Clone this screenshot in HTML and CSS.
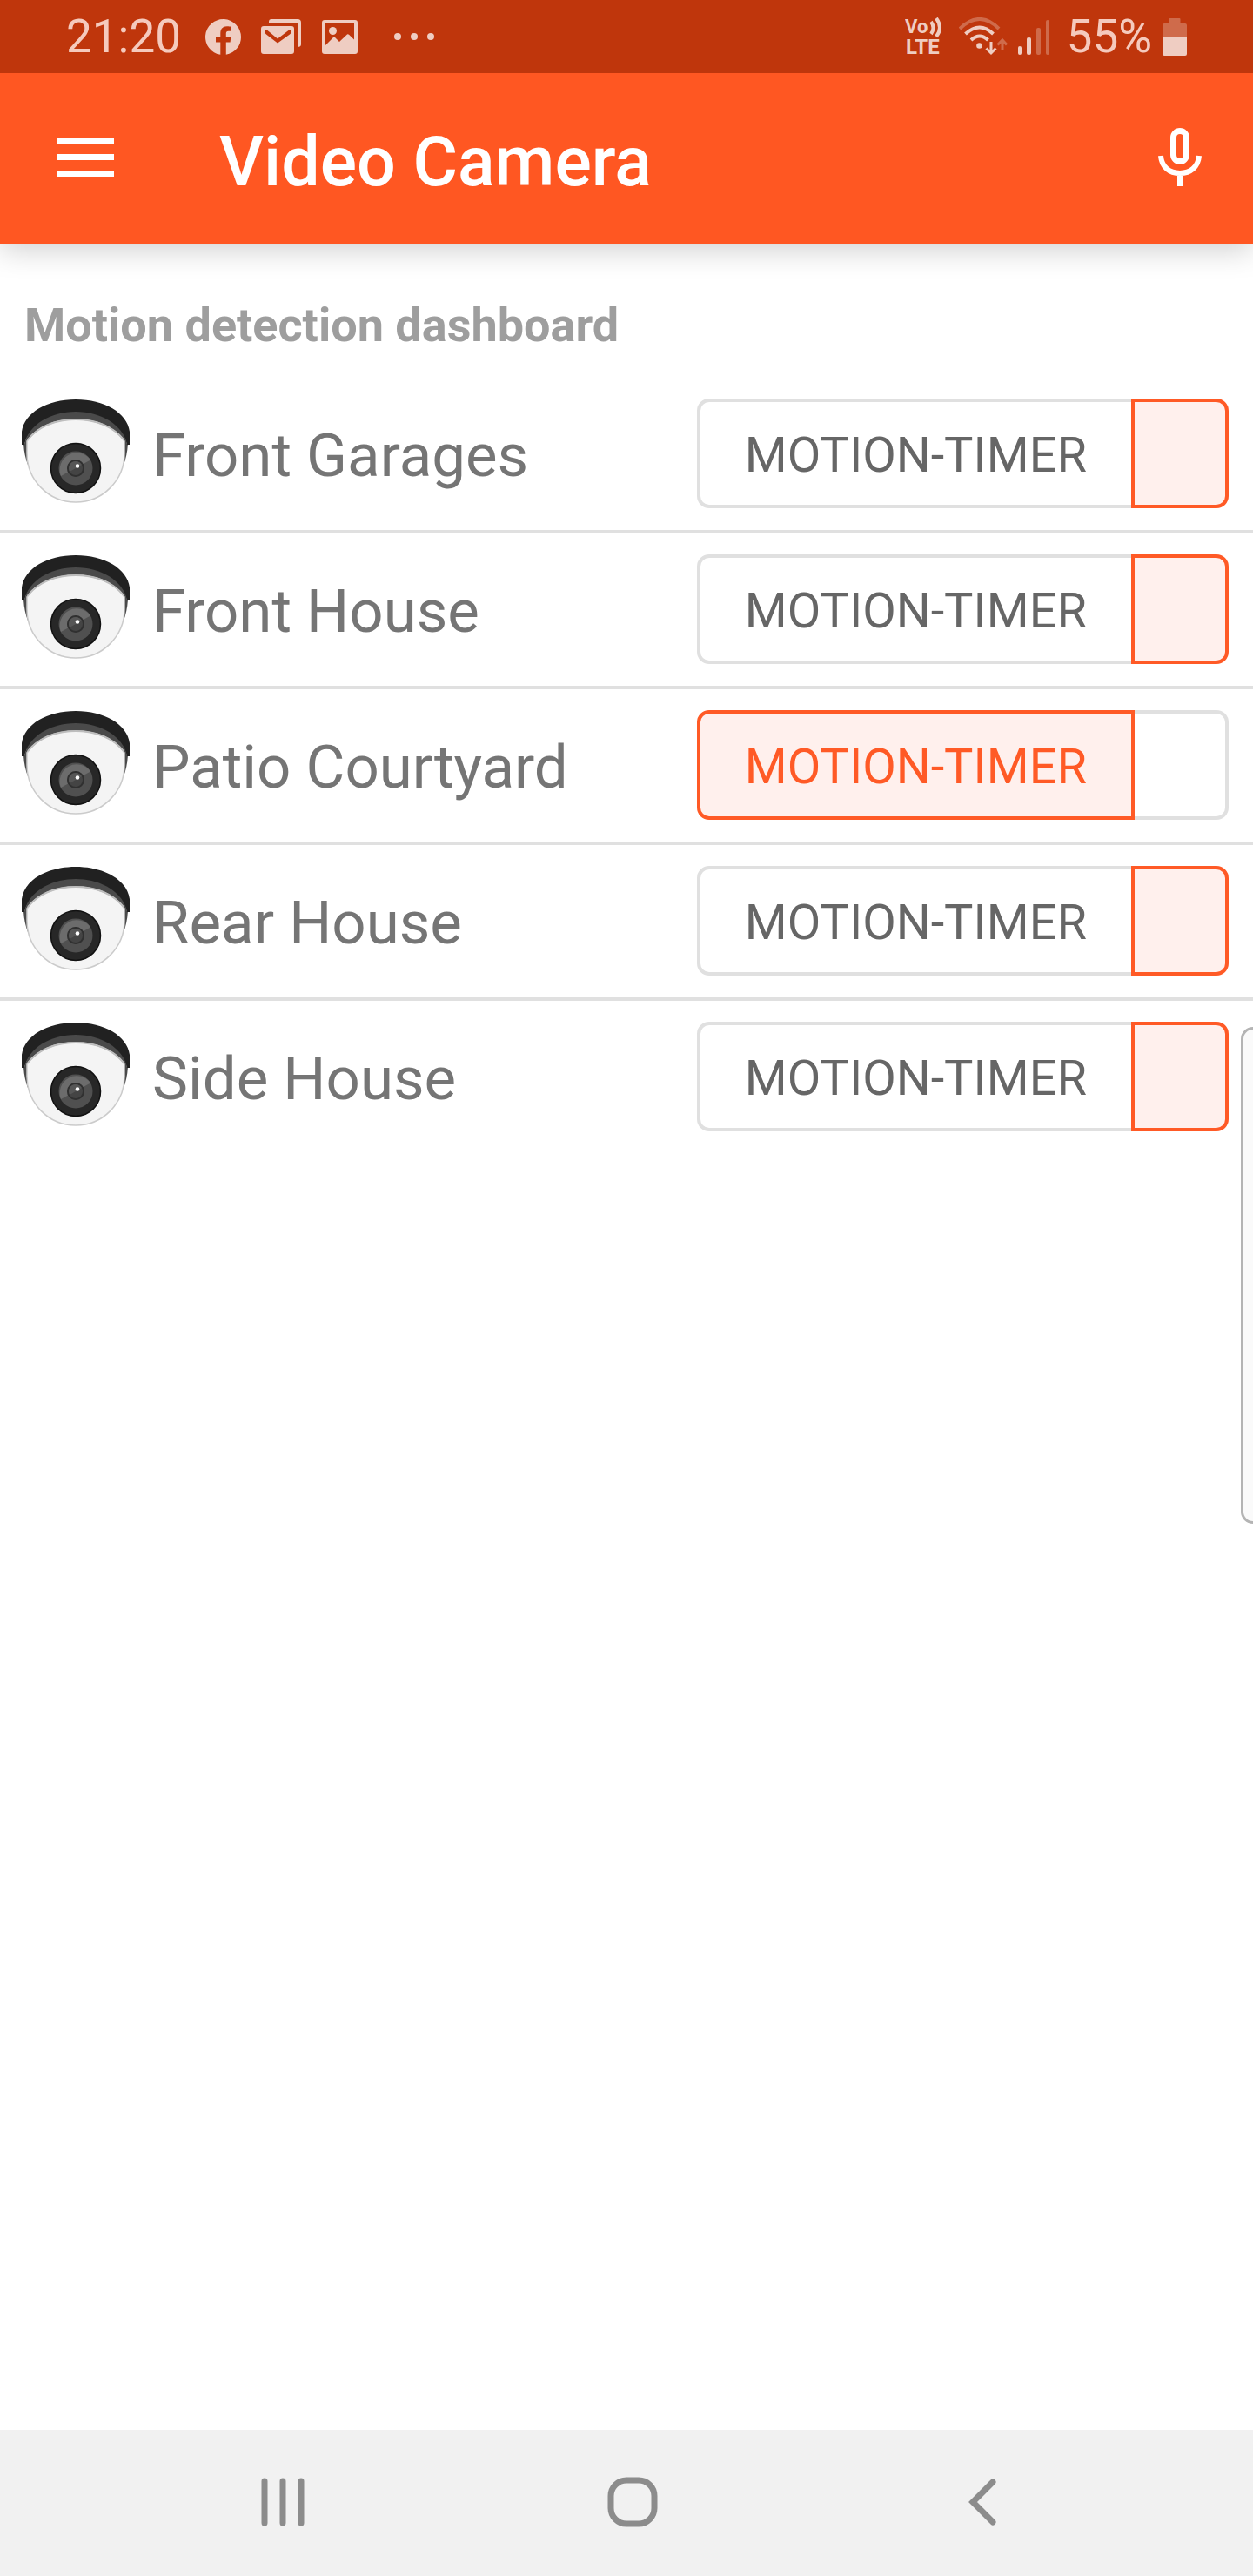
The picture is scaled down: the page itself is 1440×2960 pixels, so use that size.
FILE: index.html
```html
<!DOCTYPE html>
<html lang="en">
<head>
    <meta charset="UTF-8">
    <meta name="viewport" content="width=device-width, initial-scale=1.0">
    <title>Video Camera</title>
    <link rel="stylesheet" href="styles.css">
</head>
<body>
    <!-- Shared camera icon -->
    <svg class="sprite" aria-hidden="true">
        <defs>
            <symbol id="camera" viewBox="0 0 126 120">
                <path d="M3 52 Q4 66 8 76 H118 Q122 66 123 52 Z" fill="#4a4a4a"/>
                <path d="M1 53 V38 C4 16 30 1 63 1 S122 16 125 38 V53 H122 C117 32 94 17 63 17 S9 32 4 53 Z" fill="#212121"/>
                <path d="M4 52 C9 30 34 15 63 15 S117 30 122 52 L118 60 H8 Z" fill="#4a4a4a"/>
                <path d="M7 49 C18 33 38 24 63 24 S108 33 119 49 V63 A56 56 0 0 1 7 63 Z" fill="#f4f4f4" stroke="#cbcbcb" stroke-width="1.5"/>
                <path d="M8 47 C20 32 40 24 63 24 S106 32 118 47" fill="none" stroke="#bdbdbd" stroke-width="2"/>
                <circle cx="63" cy="80" r="28.5" fill="#272727" stroke="#111" stroke-width="1.5"/>
                <circle cx="63" cy="80" r="19.5" fill="#505050"/>
                <path d="M46 89 A19.500 19.500 0 0 1 80 70.500 Z" fill="#6c6c6c"/>
                <circle cx="63" cy="80" r="10" fill="#444"/>
                <circle cx="63" cy="80" r="9" fill="none" stroke="#303030" stroke-width="2"/>
                <path d="M56 84 A8 8 0 0 1 70 76 Z" fill="#565656"/>
                <circle cx="65" cy="77.500" r="2.300" fill="#fff"/>
            </symbol>
        </defs>
    </svg>

    <div class="status-bar">
        <div class="status-group">
            <span class="clock">21:20</span>
            <svg class="icon-fb" width="41" height="41" viewBox="0 0 41 41" role="img" aria-label="Facebook">
                <path d="M41 20.500 A20.500 20.500 0 1 0 17.300 40.800 V26.500 H12 V20.500 H17.300 V16 C17.300 10.700 20.400 8.200 25 8.200 C27 8.200 28.800 8.500 29.300 8.600 V13.700 H26.500 C24.500 13.700 23.800 15 23.800 16.600 V20.500 H29.300 L28.600 26.500 H23.800 V40.800 A20.500 20.500 0 0 0 41 20.500 Z"/>
            </svg>
            <svg class="icon-mail" width="47" height="42" viewBox="0 0 47 42" role="img" aria-label="Mail">
                <path d="M9 4 Q9 1 12 1 H42 Q46 1 46 5 V30 Q46 33 42 33 V5 H9 Z"/>
                <path fill-rule="evenodd" d="M3 9 H35 Q38 9 38 12 V38 Q38 41 35 41 H3 Q0 41 0 38 V12 Q0 9 3 9 Z M5 14 Q4 17 6 18.500 L19 28.500 L33 18.500 Q35 17 34 14 L31.500 14 L19 23.500 L7.500 14 Z"/>
            </svg>
            <svg class="icon-picture" width="41" height="41" viewBox="0 0 41 41" role="img" aria-label="Picture">
                <path fill-rule="evenodd" d="M3 1 H38 Q41 1 41 4 V37 Q41 40 38 40 H3 Q0 40 0 37 V4 Q0 1 3 1 Z M4 5 V30 L13 21 Q14 20.300 15 21 L20 26 L29 17.500 Q30 17 31 17.700 L37 23.500 V5 Z"/>
                <circle cx="12.500" cy="13.500" r="4.500"/>
            </svg>
            <svg class="icon-more" width="46" height="8" viewBox="0 0 46 8" role="img" aria-label="More notifications">
                <circle cx="4" cy="4" r="4"/>
                <circle cx="23" cy="4" r="4"/>
                <circle cx="42" cy="4" r="4"/>
            </svg>
        </div>
        <div class="status-group">
            <svg class="icon-volte" width="44" height="56" viewBox="0 -6 44 56">
                <text x="0" y="18" font-size="22">Vo</text>
                <text x="1" y="42" font-size="24">LTE</text>
                <path class="line" d="M30 5 Q35 12 30 19 M36 1 Q44 12 36 22"/>
            </svg>
            <svg class="icon-wifi" width="56" height="44" viewBox="0 0 56 44" role="img" aria-label="Wi-Fi">
                <path class="line dim" d="M1 13 Q24 -9 46 13"/>
                <path class="line" d="M7.500 19 Q24 4 39.500 19 M14 26 Q24 17 33.500 26"/>
                <circle cx="23.500" cy="32.500" r="3.300"/>
                <path class="line arrow" d="M37 28 V41 M31.500 35.500 L37 41 L42.500 35.500"/>
                <path class="line arrow dim" d="M50 38 V25 M44.500 31.500 L50 26 L55 31.500"/>
            </svg>
            <svg class="icon-signal" width="36" height="41" viewBox="0 0 36 41" role="img" aria-label="Signal">
                <rect x="0" y="31" width="4" height="10" rx="2"/>
                <rect x="10" y="21" width="5" height="20" rx="2"/>
                <rect class="dim" x="21" y="10" width="5" height="31" rx="2"/>
                <rect class="dim" x="32" y="1" width="4" height="40" rx="2"/>
            </svg>
            <span class="battery-text">55%</span>
            <svg class="icon-battery" width="28" height="43" viewBox="0 0 28 43" role="img" aria-label="Battery">
                <path class="dim" d="M0 22 V8 Q0 6 2 6 H7.500 V1 Q7.500 0 8.500 0 H19.500 Q20.500 0 20.500 1 V6 H26 Q28 6 28 8 V22 Z"/>
                <path d="M0 22 H28 V41 Q28 43 26 43 H2 Q0 43 0 41 Z"/>
            </svg>
        </div>
    </div>

    <header class="app-bar">
        <button class="icon-btn" type="button" aria-label="Menu">
            <svg width="66" height="46" viewBox="0 0 66 46">
                <path d="M0 0 H66 V7 H0 Z M0 19 H66 V26 H0 Z M0 38 H66 V45 H0 Z"/>
            </svg>
        </button>
        <h1>Video Camera</h1>
        <button class="icon-btn mic-btn" type="button" aria-label="Voice">
            <svg width="50" height="68" viewBox="0 0 50 68">
                <rect x="17.500" y="3.500" width="15" height="35" rx="7.500" fill="none" stroke="#fff" stroke-width="7"/>
                <path d="M3 32 C4 45 13 52 25 52 S46 45 47 32 M25 51 V67" fill="none" stroke="#fff" stroke-width="6"/>
            </svg>
        </button>
    </header>

    <main>
        <h2>Motion detection dashboard</h2>
        <ul class="camera-list">
            <li class="camera-row">
                <svg class="camera-icon"><use href="#camera"/></svg>
                <span class="camera-name">Front Garages</span>
                <div class="toggle" role="group" aria-label="Front Garages">
                    <button class="toggle-btn" type="button" aria-pressed="false">MOTION-TIMER</button>
                    <button class="toggle-btn toggle-off active" type="button" aria-pressed="true" aria-label="Off"></button>
                </div>
            </li>
            <li class="camera-row">
                <svg class="camera-icon"><use href="#camera"/></svg>
                <span class="camera-name">Front House</span>
                <div class="toggle" role="group" aria-label="Front House">
                    <button class="toggle-btn" type="button" aria-pressed="false">MOTION-TIMER</button>
                    <button class="toggle-btn toggle-off active" type="button" aria-pressed="true" aria-label="Off"></button>
                </div>
            </li>
            <li class="camera-row">
                <svg class="camera-icon"><use href="#camera"/></svg>
                <span class="camera-name">Patio Courtyard</span>
                <div class="toggle" role="group" aria-label="Patio Courtyard">
                    <button class="toggle-btn active" type="button" aria-pressed="true">MOTION-TIMER</button>
                    <button class="toggle-btn toggle-off" type="button" aria-pressed="false" aria-label="Off"></button>
                </div>
            </li>
            <li class="camera-row">
                <svg class="camera-icon"><use href="#camera"/></svg>
                <span class="camera-name">Rear House</span>
                <div class="toggle" role="group" aria-label="Rear House">
                    <button class="toggle-btn" type="button" aria-pressed="false">MOTION-TIMER</button>
                    <button class="toggle-btn toggle-off active" type="button" aria-pressed="true" aria-label="Off"></button>
                </div>
            </li>
            <li class="camera-row">
                <svg class="camera-icon"><use href="#camera"/></svg>
                <span class="camera-name">Side House</span>
                <div class="toggle" role="group" aria-label="Side House">
                    <button class="toggle-btn" type="button" aria-pressed="false">MOTION-TIMER</button>
                    <button class="toggle-btn toggle-off active" type="button" aria-pressed="true" aria-label="Off"></button>
                </div>
            </li>
        </ul>
    </main>

    <div class="edge-handle"></div>

    <nav class="nav-bar">
        <button class="nav-btn" type="button" aria-label="Recents">
            <svg width="58" height="58" viewBox="0 0 58 58">
                <path d="M8 5 V53 M29 5 V53 M50 5 V53"/>
            </svg>
        </button>
        <button class="nav-btn" type="button" aria-label="Home">
            <svg width="58" height="58" viewBox="0 0 58 58">
                <rect x="4" y="4" width="50" height="50" rx="18"/>
            </svg>
        </button>
        <button class="nav-btn" type="button" aria-label="Back">
            <svg width="58" height="58" viewBox="0 0 58 58">
                <path d="M41 6 L18 29 L41 52"/>
            </svg>
        </button>
    </nav>
</body>
</html>
```
FILE: styles.css
```css
* {
    box-sizing: border-box;
}

body {
    font-family: Roboto, sans-serif;
    background-color: #fff;
    margin: 0;
    min-height: 100vh;
    display: flex;
    flex-direction: column;
}

button {
    font-family: inherit;
    background: none;
    border: none;
    padding: 0;
    cursor: pointer;
}

svg {
    display: block;
    flex-shrink: 0;
}

.sprite {
    position: absolute;
    width: 0;
    height: 0;
}

/* Status bar */
.status-bar {
    position: relative;
    z-index: 2;
    display: flex;
    justify-content: space-between;
    height: 84px;
    padding: 0 76px;
    background-color: #bf360c;
    color: #f5cabd;
    font-size: 53px;
    line-height: 84px;
}

.status-group {
    display: flex;
    align-items: center;
}

.status-bar svg {
    fill: #efcdc2;
}

.status-bar .line {
    fill: none;
    stroke: #efcdc2;
    stroke-width: 4;
}

.status-bar .arrow {
    stroke-width: 3;
}

.status-bar .dim {
    opacity: 0.35;
}

.icon-fb {
    margin-left: 28px;
}

.icon-mail,
.icon-picture {
    margin-left: 23px;
}

.icon-more {
    margin-left: 42px;
}

.icon-volte {
    font-weight: 700;
}

.icon-wifi {
    margin-left: 18px;
}

.icon-signal {
    margin-left: 12px;
}

.battery-text {
    margin-left: 20px;
}

.icon-battery {
    margin-left: 12px;
}

/* App bar */
.app-bar {
    position: relative;
    display: flex;
    align-items: center;
    height: 196px;
    padding: 0 59px 3px 65px;
    background-color: #ff5722;
    box-shadow: 0 8px 32px rgba(0, 0, 0, 0.18);
}

.app-bar svg {
    fill: #fff;
}

h1 {
    margin: 0 0 0 121px;
    padding-top: 10px;
    color: #fff;
    font-size: 79px;
    font-weight: 500;
    line-height: 90px;
}

.mic-btn {
    margin-left: auto;
}

/* Dashboard */
main {
    flex: 1;
}

h2 {
    margin: 0;
    padding: 62px 28px 28px;
    color: #9e9e9e;
    font-size: 54px;
    font-weight: 700;
    line-height: 64px;
}

.camera-list {
    list-style: none;
    margin: 0;
    padding: 0;
}

.camera-row {
    display: flex;
    align-items: center;
    padding: 24px 28px 25px 24px;
    border-bottom: 4px solid #e0e0e0;
}

.camera-row:last-child {
    border-bottom: none;
}

.camera-icon {
    align-self: flex-start;
    width: 126px;
    height: 120px;
}

.camera-name {
    flex: 1;
    margin-left: 25px;
    padding-top: 6px;
    color: #757575;
    font-size: 69px;
    line-height: 82px;
}

.toggle {
    display: flex;
}

.toggle-btn {
    position: relative;
    height: 126px;
    padding: 4px 51px 0;
    border: 4px solid #e0e0e0;
    border-radius: 14px 0 0 14px;
    color: #666;
    font-size: 56px;
}

.toggle-off {
    width: 112px;
    margin-left: -4px;
    padding: 0;
    border-radius: 0 14px 14px 0;
}

.toggle-btn.active {
    z-index: 1;
    background-color: #fff0ed;
    border-color: #ff5a26;
    color: #ff5a26;
}

/* Edge panel handle, lies over the page */
.edge-handle {
    position: fixed;
    top: calc(40% - 4px);
    right: -14px;
    width: 28px;
    height: 571px;
    border: 3px solid #b4b4b4;
    border-radius: 20px;
    background-color: #fafafa;
}

/* Navigation bar */
.nav-bar {
    display: grid;
    grid-template-columns: repeat(3, 1fr);
    height: 168px;
    padding: 0 110px 3px 124px;
    background-color: #f1f1f1;
}

.nav-btn {
    display: flex;
    align-items: center;
    justify-content: center;
}

.nav-btn svg {
    fill: none;
    stroke: #8c8c8c;
    stroke-width: 7;
    stroke-linecap: round;
}
```
